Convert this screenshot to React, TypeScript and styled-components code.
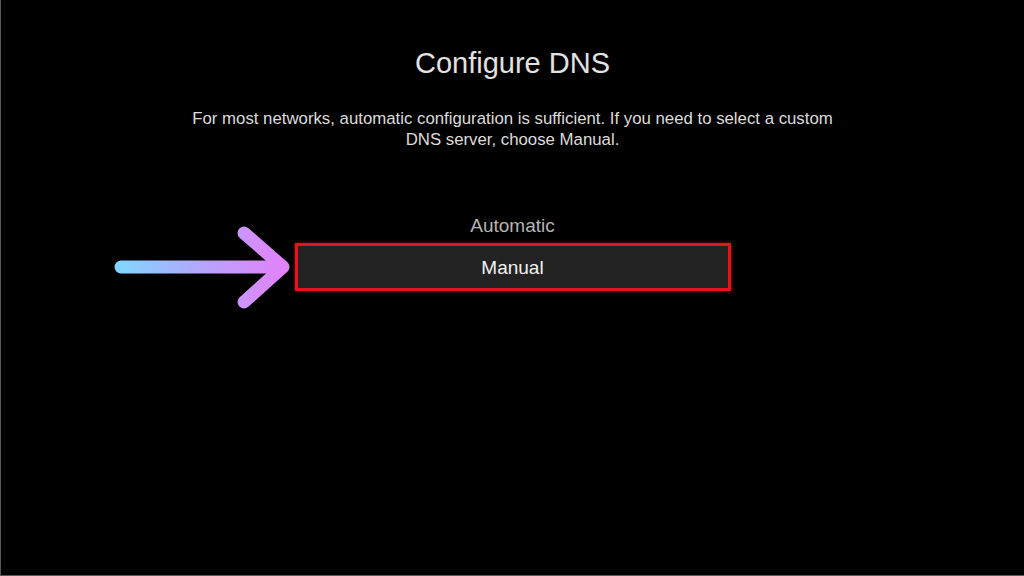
import styled, { createGlobalStyle } from 'styled-components'

const GlobalStyle = createGlobalStyle`
  html, body {
    margin: 0;
    padding: 0;
    background: #000;
  }
  body {
    font-family: "Liberation Sans", Arial, sans-serif;
  }
`

const Screen = styled.div`
  width: 1024px;
  height: 576px;
  box-sizing: border-box;
  background: #000;
  border-left: 1px solid #5a5a5a;
  border-bottom: 1px solid #5a5a5a;
  display: flex;
  flex-direction: column;
  align-items: center;
  padding-top: 46px;
  overflow: hidden;
`

const Title = styled.h1`
  margin: 0;
  font-size: 29px;
  font-weight: 400;
  color: #e2e2e2;
  line-height: 34px;
`

const Description = styled.p`
  margin: 28px 0 0;
  width: 664px;
  text-align: center;
  font-size: 16.8px;
  line-height: 21px;
  color: #dcdcdc;
`

const Options = styled.div`
  position: relative;
  margin-top: 58px;
  display: flex;
  flex-direction: column;
  align-items: center;
`

const Option = styled.div<{ $focused?: boolean }>`
  width: 436px;
  height: ${p => (p.$focused ? '48px' : '35px')};
  box-sizing: border-box;
  display: flex;
  align-items: center;
  justify-content: center;
  padding-top: ${p => (p.$focused ? '2px' : '0')};
  font-size: 19px;
  color: ${p => (p.$focused ? '#f2f2f2' : '#b4b4b4')};
  background: ${p => (p.$focused ? '#222' : 'transparent')};
  border: ${p => (p.$focused ? '3px solid #e3141b' : 'none')};
  box-shadow: ${p => (p.$focused ? '0 0 4px rgba(230, 20, 30, 0.55)' : 'none')};
`

const Pointer = styled.svg`
  position: absolute;
  left: -188px;
  top: 16px;
  width: 190px;
  height: 90px;
  overflow: visible;
`

function Arrow() {
  // viewBox in page coordinates, origin at (108, 225)
  return (
    <Pointer viewBox="108 225 190 90">
      <defs>
        <linearGradient id="arrowGrad" gradientUnits="userSpaceOnUse" x1="116" y1="0" x2="288" y2="0">
          <stop offset="0" stopColor="#7fd8ff" />
          <stop offset="0.5" stopColor="#b4a6fc" />
          <stop offset="1" stopColor="#e580fb" />
        </linearGradient>
      </defs>
      <g fill="none" stroke="url(#arrowGrad)" strokeWidth="13" strokeLinecap="round" strokeLinejoin="round">
        <line x1="122" y1="268" x2="282" y2="268" />
        <polyline points="245,234 284,268 245,303" />
      </g>
    </Pointer>
  )
}

export default function App() {
  return (
    <>
      <GlobalStyle />
      <Screen>
        <Title>Configure DNS</Title>
        <Description>
          For most networks, automatic configuration is sufficient. If you need to select a custom DNS server, choose
          Manual.
        </Description>
        <Options>
          <Option>Automatic</Option>
          <Option $focused>Manual</Option>
          <Arrow />
        </Options>
      </Screen>
    </>
  )
}
